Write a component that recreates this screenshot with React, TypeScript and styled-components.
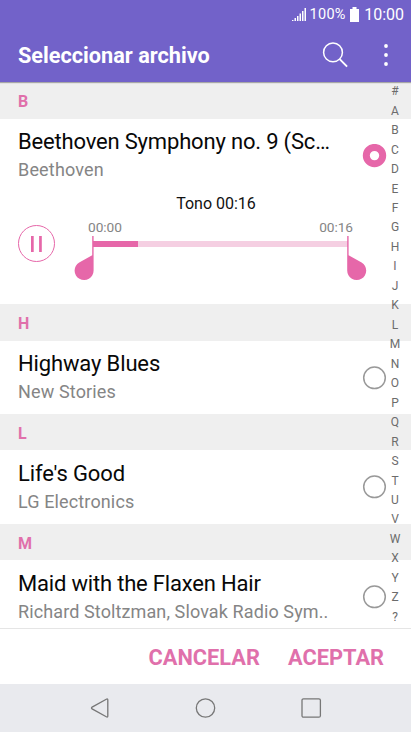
import React from "react";
import styled, { createGlobalStyle } from "styled-components";

const PINK = "#e667a9";

const GlobalStyle = createGlobalStyle`
  * { box-sizing: border-box; }
  body { margin: 0; background: #fff; font-family: Roboto, "Liberation Sans", sans-serif; }
`;

const Screen = styled.div`
  width: 411px;
  height: 732px;
  display: flex;
  flex-direction: column;
  overflow: hidden;
  background: #fff;
`;

const Header = styled.header`
  height: 82px;
  flex: none;
  background: #7262c9;
  color: #fff;
  box-shadow: 0 1px 1px rgba(0, 0, 0, 0.3);
  z-index: 1;
`;

const StatusBar = styled.div`
  height: 28px;
  padding: 1px 7px 0 0;
  display: flex;
  align-items: center;
  justify-content: flex-end;
  line-height: 28px;
`;

const Battery = styled.span`
  font-size: 14.5px;
  letter-spacing: 0.25px;
  margin: 0 4.5px 0 3.5px;
`;

const Clock = styled.span`
  font-size: 16px;
  margin-left: 5px;
`;

const AppBar = styled.div`
  height: 54px;
  padding: 0 15px 0 18px;
  display: flex;
  align-items: center;
`;

const PageTitle = styled.h1`
  margin: 0;
  padding-top: 2px;
  flex: 1;
  font-size: 21.7px;
  font-weight: 700;
  line-height: 54px;
  white-space: nowrap;
`;

const IconButton = styled.button<{ $width: number }>`
  width: ${(p) => p.$width}px;
  height: 36px;
  padding: 0;
  border: 0;
  background: none;
  color: inherit;
  display: flex;
  align-items: center;
  justify-content: center;

  & + & { margin-left: 20px; }
  svg { display: block; }
`;

const List = styled.main`
  position: relative;
  flex: none;
  height: 546px;
  overflow: hidden;
`;

const SectionHeader = styled.h2<{ $height: number }>`
  margin: 0;
  height: ${(p) => p.$height}px;
  padding: 1px 18px 0;
  background: #efefef;
  color: #e070ab;
  font-size: 16px;
  font-weight: 700;
  line-height: 37px;
`;

const Track = styled.div<{ $height: number }>`
  height: ${(p) => p.$height}px;
  padding: 0 24px 0 18px;
  display: flex;
  align-items: center;
  justify-content: space-between;
`;

const TrackText = styled.div<{ $top: number }>`
  width: 330px;
  flex: none;
  padding-top: ${(p) => p.$top}px;
`;

const TrackTitle = styled.div<{ $spacing: number }>`
  color: #080808;
  font-size: 22px;
  line-height: 28px;
  letter-spacing: ${(p) => p.$spacing}px;
  white-space: nowrap;
`;

const Artist = styled.div<{ $spacing: number }>`
  color: #858585;
  font-size: 18px;
  line-height: 28px;
  letter-spacing: ${(p) => p.$spacing}px;
  white-space: nowrap;
`;

const RadioIcon = styled.svg`
  display: block;
  flex: none;
  fill: #fff;
`;

const Player = styled.div`
  height: 112px;
  display: grid;
  grid-template-columns: 74px 294px;
  grid-template-rows: 27px 85px;
`;

const ToneLabel = styled.div`
  grid-column: 1 / -1;
  width: 411px;
  padding: 1px 0 0 21px;
  text-align: center;
  color: #111;
  font-size: 16px;
  line-height: 22px;
`;

const PauseButton = styled.button`
  width: 37px;
  height: 37px;
  margin: 6px 0 0 18px;
  padding: 0;
  border: 1px solid ${PINK};
  border-radius: 50%;
  background: none;
  display: flex;
  align-items: center;
  justify-content: center;

  svg { display: block; }
`;

const Trimmer = styled.div`
  display: flex;
  flex-direction: column;
`;

const Times = styled.div`
  display: flex;
  justify-content: space-between;
  padding: 0 15px 0 14px;
  color: #858585;
  font-size: 13.7px;
  letter-spacing: -0.05px;
  line-height: 16px;
  height: 16px;
`;

const RangeDrawing = styled.svg`
  display: block;
`;

const IndexRail = styled.nav`
  position: absolute;
  top: 0;
  right: 6px;
  width: 20px;
  height: 545px;
  display: grid;
  grid-template-rows: repeat(28, 1fr);
  justify-items: center;
  align-items: center;
  color: #6c6c6c;
  font-size: 12px;
  line-height: 19px;
`;

const Actions = styled.div`
  height: 56px;
  flex: none;
  border-top: 1px solid #e5e5e5;
  padding: 3px 27px 0 0;
  display: flex;
  justify-content: flex-end;
  align-items: center;
  gap: 28px;
`;

const Action = styled.button`
  padding: 0;
  border: 0;
  background: none;
  color: #e070ab;
  font-family: inherit;
  font-size: 21.8px;
  font-weight: 700;
  line-height: 28px;
`;

const NavBar = styled.footer`
  height: 48px;
  flex: none;
  padding-right: 1px;
  background: #e9eaee;
  display: flex;
  justify-content: center;
  align-items: center;
  gap: 82px;
`;

const NavIcon = styled.svg`
  width: 24px;
  height: 24px;
  fill: none;
  stroke: #777;
  stroke-width: 1.3;
`;

const LETTERS = "#ABCDEFGHIJKLMNOPQRSTUVWXYZ?".split("");

type TrackData = {
  letter: string;
  title: string;
  artist: string;
  height: number;
  header: number;
  titleSpacing: number;
  artistSpacing: number;
  checked?: boolean;
};

const TRACKS: TrackData[] = [
  { letter: "B", title: "Beethoven Symphony no. 9 (Sc…", artist: "Beethoven", header: 37, height: 73, titleSpacing: -0.18, artistSpacing: 0.18, checked: true },
  { letter: "H", title: "Highway Blues", artist: "New Stories", header: 37, height: 73, titleSpacing: -0.14, artistSpacing: 0.15 },
  { letter: "L", title: "Life's Good", artist: "LG Electronics", header: 36, height: 74, titleSpacing: -0.13, artistSpacing: 0.13 },
  { letter: "M", title: "Maid with the Flaxen Hair", artist: "Richard Stoltzman, Slovak Radio Sym..", header: 36, height: 74, titleSpacing: -0.19, artistSpacing: 0.11 },
];

const Radio = ({ checked }: { checked?: boolean }) => (
  <RadioIcon width="25" height="24" viewBox="0 0 25 24">
    {checked ? (
      <circle cx="12.5" cy="11.6" r="8.2" stroke={PINK} strokeWidth="7" />
    ) : (
      <circle cx="12.5" cy="11.8" r="10.8" stroke="#999" strokeWidth="1.5" />
    )}
  </RadioIcon>
);

const TonePlayer = () => (
  <Player>
    <ToneLabel>Tono 00:16</ToneLabel>
    <PauseButton aria-label="Pausar">
      <svg width="11" height="16" viewBox="0 0 11 16" fill={PINK}>
        <path d="M0 0h2.7v16H0zM8.1 0h2.7v16H8.1z" />
      </svg>
    </PauseButton>
    <Trimmer>
      <Times>
        <span>00:00</span>
        <span>00:16</span>
      </Times>
      <RangeDrawing width="294" height="48" viewBox="74 235 294 48">
        <path d="M93 241h255v6H93z" fill="#f5cfe2" />
        <path d="M93 241h45v6H93z" fill={PINK} />
        <path d="M92.2 236h1.4v34.5a9.5 9.5 0 1 1-14.4-8.1l13-7.2z" fill={PINK} />
        <path d="M348.6 236h-1.4v34.5a9.5 9.5 0 1 0 14.4-8.1l-13-7.2z" fill={PINK} />
      </RangeDrawing>
    </Trimmer>
  </Player>
);

export default function App() {
  return (
    <Screen>
      <GlobalStyle />
      <Header>
        <StatusBar>
          <svg width="14" height="13" viewBox="0 0 14 13" fill="#fff">
            <path d="M0 12h1.5v1H0zM2.5 10H4v3H2.5zM5 8h1.5v5H5zM7.5 5.5H9V13H7.5zM10 3h1.5v10H10zM12.5 0H14v13h-1.5z" />
          </svg>
          <Battery>100%</Battery>
          <svg width="9" height="15" viewBox="0 0 9 15" fill="#fff">
            <path d="M2.5 0h4v2H9v13H0V2h2.5z" />
          </svg>
          <Clock>10:00</Clock>
        </StatusBar>
        <AppBar>
          <PageTitle>Seleccionar archivo</PageTitle>
          <IconButton $width={40} aria-label="Buscar">
            <svg width="28" height="28" viewBox="0 0 28 28" fill="none" stroke="#fff" strokeWidth="1.5">
              <circle cx="11" cy="11.4" r="9.4" />
              <path d="M17.7 18.1l7.4 7.6" strokeWidth="1.9" />
            </svg>
          </IconButton>
          <IconButton $width={20} aria-label="Más opciones">
            <svg width="6" height="24" viewBox="0 0 6 24" fill="#fff">
              <circle cx="3" cy="3" r="1.9" />
              <circle cx="3" cy="12" r="1.9" />
              <circle cx="3" cy="21" r="1.9" />
            </svg>
          </IconButton>
        </AppBar>
      </Header>
      <List>
        {TRACKS.map((t) => (
          <section key={t.letter}>
            <SectionHeader $height={t.header}>{t.letter}</SectionHeader>
            <Track $height={t.height}>
              <TrackText $top={t.height === 73 ? 1 : 2}>
                <TrackTitle $spacing={t.titleSpacing}>{t.title}</TrackTitle>
                <Artist $spacing={t.artistSpacing}>{t.artist}</Artist>
              </TrackText>
              <Radio checked={t.checked} />
            </Track>
            {t.checked && <TonePlayer />}
          </section>
        ))}
        <IndexRail>
          {LETTERS.map((l) => (
            <span key={l}>{l}</span>
          ))}
        </IndexRail>
      </List>
      <Actions>
        <Action>CANCELAR</Action>
        <Action>ACEPTAR</Action>
      </Actions>
      <NavBar>
        <NavIcon viewBox="-0.5 0 24 24">
          <path d="M18.8 3.2Q20.3 2.4 20.3 4V20Q20.3 21.6 18.8 20.8L4.6 12.9Q3.4 12 4.6 11.1Z" />
        </NavIcon>
        <NavIcon viewBox="-0.5 0 24 24">
          <circle cx="12" cy="12" r="9.2" />
        </NavIcon>
        <NavIcon viewBox="-0.5 0 24 24">
          <rect x="2.5" y="2.8" width="18.4" height="18.4" rx="1.5" />
        </NavIcon>
      </NavBar>
    </Screen>
  );
}
